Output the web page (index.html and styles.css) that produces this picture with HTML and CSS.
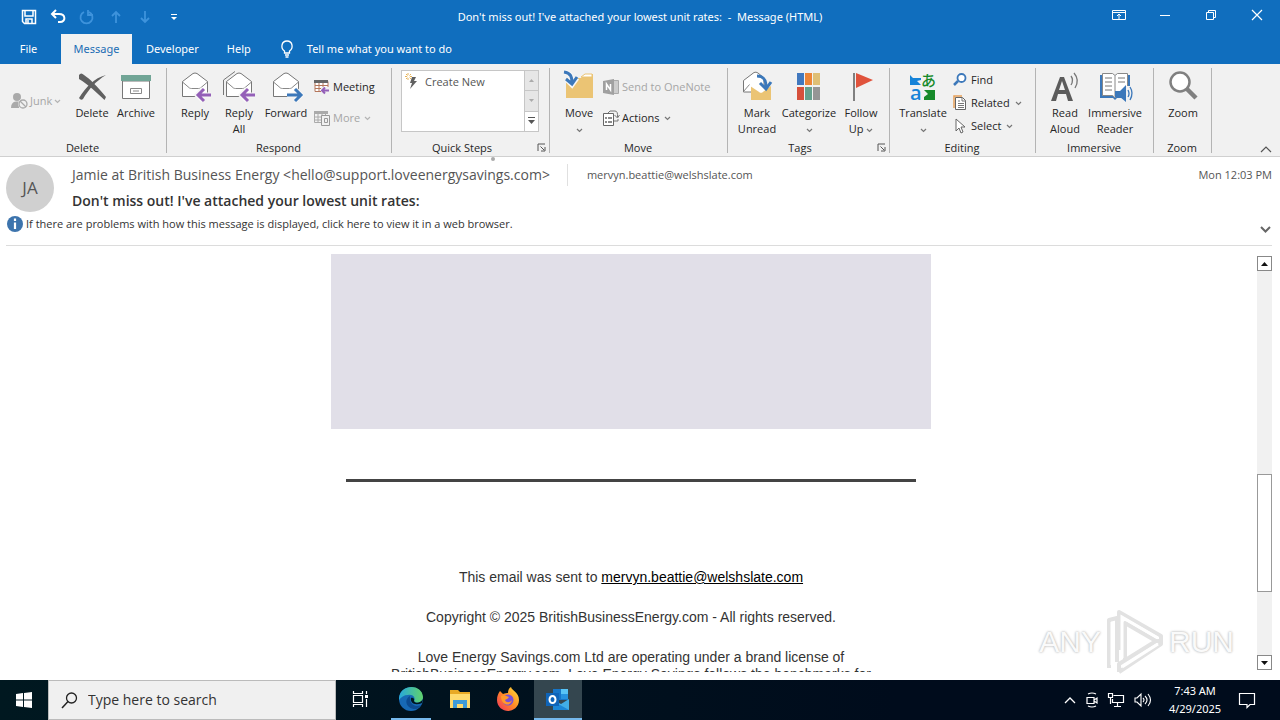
FILE: index.html
```html
<!DOCTYPE html>
<html lang="en">
<head>
<meta charset="utf-8">
<title>Don't miss out! I've attached your lowest unit rates: - Message (HTML)</title>
<link rel="stylesheet" href="styles.css">
</head>
<body>
<svg class="defs" aria-hidden="true">
  <symbol id="caret" viewBox="0 0 7 5"><path d="M1 1l2.500 2.500L6 1" fill="none" stroke="currentColor" stroke-width="1.200"/></symbol>
  <symbol id="launcher" viewBox="0 0 9 9"><path d="M1 8V1h7M3.500 3.500L7 7M8 4v4H4" fill="none" stroke="#555" /></symbol>
  <symbol id="envelope" viewBox="0 0 32 32"><path d="M3.500 11.500L14 3.500q2-1 4 0L28.500 11.500v15h-25z" fill="#fff" stroke="#777"/><path d="M3.500 12l7 6q1 .5 2 .500h7q1 0 2-.5l7-6" fill="none" stroke="#888"/></symbol>
</svg>

<header class="titlebar">
  <div class="quick">
    <button aria-label="Save"><svg width="16" height="16" viewBox="0 0 16 16"><path d="M1.500 1.500h13v13h-11l-2-2zM4 2v5h8V2M5 14v-4h6v4M7 11v3" fill="none" stroke="#fff" stroke-width="1.500"/></svg></button>
    <button aria-label="Undo"><svg width="16" height="16" viewBox="0 0 16 16"><path d="M6 1L2 5l4 4M2 5h7c7 0 7 8 1 8H8" fill="none" stroke="#fff" stroke-width="2"/></svg></button>
    <button aria-label="Redo"><svg width="16" height="16" viewBox="0 0 16 16"><path d="M10 3a6 6 0 1 1-5 0M9 1v5h5" fill="none" stroke="#3e93dc" stroke-width="1.800"/></svg></button>
    <button aria-label="Previous item"><svg width="16" height="16" viewBox="0 0 16 16"><path d="M8 14V3M4 7l4-4 4 4" fill="none" stroke="#3e93dc" stroke-width="1.800"/></svg></button>
    <button aria-label="Next item"><svg width="16" height="16" viewBox="0 0 16 16"><path d="M8 2v11M4 9l4 4 4-4" fill="none" stroke="#3e93dc" stroke-width="1.800"/></svg></button>
    <button aria-label="Customize toolbar"><svg width="16" height="16" viewBox="0 0 16 16"><path d="M5 5.500h6" stroke="#fff"/><path d="M5 8h6l-3 3z" fill="#fff"/></svg></button>
  </div>
  <h1>Don't miss out! I've attached your lowest unit rates:&nbsp; -&nbsp; Message (HTML)</h1>
  <div class="controls">
    <button aria-label="Ribbon display options"><svg width="14" height="12" viewBox="0 0 14 12"><path d="M.5 1.500h13v9H.5zM.5 3.500h13M7 10V5M5 7l2-2 2 2" fill="none" stroke="#fff"/></svg></button>
    <button aria-label="Minimize"><svg width="12" height="12" viewBox="0 0 12 12"><path d="M1 6.500h10" stroke="#fff"/></svg></button>
    <button aria-label="Restore"><svg width="12" height="12" viewBox="0 0 12 12"><path d="M1.500 3.500h7v7h-7zM3.500 3V1.500h7v7H9" fill="none" stroke="#fff"/></svg></button>
    <button aria-label="Close"><svg width="12" height="12" viewBox="0 0 12 12"><path d="M1 1l10 10M11 1L1 11" stroke="#fff" stroke-width="1.200"/></svg></button>
  </div>
</header>

<nav class="tabs">
  <button class="tab file">File</button>
  <button class="tab active">Message</button>
  <button class="tab">Developer</button>
  <button class="tab">Help</button>
  <button class="tell"><svg width="14" height="18" viewBox="0 0 14 18"><path d="M4.500 13V11C.5 8.500 1 1 7 1s6.500 7.500 2.500 10v2zM5 15h4M5.500 17h3" fill="none" stroke="#fff" stroke-width="1.300"/></svg>Tell me what you want to do</button>
</nav>

<section class="ribbon">
  <div class="group g-delete">
    <div class="tools">
      <button class="small off junk"><svg width="18" height="18" viewBox="0 0 18 18"><circle cx="6" cy="5" r="4" fill="#aaa"/><path d="M0 16q0-6 5-6.500h3V16z" fill="#aaa"/><circle cx="12" cy="12" r="5" fill="#f1f1f1"/><circle cx="12" cy="12" r="4" fill="none" stroke="#aaa" stroke-width="1.300"/><path d="M9 9l6 6" stroke="#aaa" stroke-width="1.300"/></svg>Junk<svg class="caret"><use href="#caret"/></svg></button>
      <button class="big w44"><svg width="32" height="32" viewBox="0 0 32 32"><path d="M3 5q2-3 5 0c6 4 13 11 22 22l-1.500 3C20 22 13 15 3 9z" fill="#606060"/><path d="M30 5C20 11 13 19 7 29q-2 2-4-1C10 17 18 8 30 5z" fill="#606060"/></svg><span>Delete</span></button>
      <button class="big w44"><svg width="32" height="32" viewBox="0 0 32 32"><path d="M2.500 11h27v17.500h-27z" fill="#fff" stroke="#777"/><path d="M1 5h30v6H1z" fill="#71a596"/><path d="M10.500 18.500h11v5h-11zM13 21h6" fill="none" stroke="#888"/></svg><span>Archive</span></button>
    </div>
    <h2>Delete</h2>
  </div>
  <div class="group g-respond">
    <div class="tools">
      <button class="big w44"><svg width="32" height="32" viewBox="0 0 32 32"><use href="#envelope"/><path d="M18 25h14M24 19l-6 6 6 6" fill="none" stroke="#f7f7f7" stroke-width="5"/><path d="M19 25h13M25 19l-6 6 6 6" fill="none" stroke="#9460b8" stroke-width="3"/></svg><span>Reply</span></button>
      <button class="big w44"><svg width="32" height="32" viewBox="0 0 32 32"><path d="M.5 25V10L12 1.500" fill="none" stroke="#777"/><use href="#envelope"/><path d="M18 25h14M24 19l-6 6 6 6" fill="none" stroke="#f7f7f7" stroke-width="5"/><path d="M19 25h13M25 19l-6 6 6 6" fill="none" stroke="#9460b8" stroke-width="3"/></svg><span>Reply<br>All</span></button>
      <button class="big w50"><svg width="32" height="32" viewBox="0 0 32 32"><use href="#envelope"/><path d="M17 25h13M25 19l6 6-6 6" fill="none" stroke="#f7f7f7" stroke-width="5"/><path d="M17 25h13M25 19l6 6-6 6" fill="none" stroke="#3c78ba" stroke-width="3"/></svg><span>Forward</span></button>
      <div class="stack two">
        <button class="small"><svg width="16" height="16" viewBox="0 0 16 16"><path d="M1 2.500h13v10h-13zM1 6.500h13M1 9.500h13M5 4v8M9 4v8" fill="#fff" stroke="#b4765b"/><path d="M0 1h14v3H0z" fill="#666"/><path d="M7 8h9v7H7z" fill="#f1f1f1"/><path d="M8 11.500h7M11 8.500l-3 3 3 3" fill="none" stroke="#9460b8" stroke-width="2"/></svg>Meeting</button>
        <button class="small off"><svg width="16" height="16" viewBox="0 0 16 16"><path d="M0 1h14v3H0z" fill="#aaa"/><path d="M.5 3.500h11v9H.5zM.5 7h11M.5 10h11M4 4v8M8 4v8" fill="none" stroke="#aaa"/><path d="M7.500 5.500h8v10h-8zM10.500 8.500h3v4h-3z" fill="#f1f1f1" stroke="#999"/></svg>More<svg class="caret"><use href="#caret"/></svg></button>
      </div>
    </div>
    <h2>Respond</h2>
  </div>
  <div class="group g-steps">
    <div class="tools">
      <div class="gallery">
        <button class="step"><svg width="16" height="18" viewBox="0 0 16 18"><path d="M3 0v7M0 3.500h7M1 1l5 5M6 1L1 6" stroke="#e6b45a"/><circle cx="3.500" cy="3.500" r="1.500" fill="#fff"/><path d="M7 4h4l-2 4h3L5 16l2-6H5z" fill="#606060"/></svg>Create New</button>
        <div class="spin">
          <button aria-label="Row up"><svg width="7" height="5" viewBox="0 0 7 5"><path d="M1 4l2.500-3L6 4z" fill="#aaa"/></svg></button>
          <button aria-label="Row down"><svg width="7" height="5" viewBox="0 0 7 5"><path d="M1 1l2.500 3L6 1z" fill="#aaa"/></svg></button>
          <button class="more" aria-label="More steps"><svg width="7" height="8" viewBox="0 0 7 8"><path d="M0 .5h7" stroke="#555"/><path d="M0 3h7L3.500 7z" fill="#555"/></svg></button>
        </div>
      </div>
    </div>
    <h2>Quick Steps</h2>
    <button class="launch" aria-label="Manage quick steps"><svg width="9" height="9"><use href="#launcher"/></svg></button>
  </div>
  <div class="group g-move">
    <div class="tools">
      <button class="big w40"><svg width="32" height="32" viewBox="0 0 32 32"><path d="M3 8h15l4-4h8v24H3z" fill="#ebc474"/><path d="M18 7l4-3h7v3z" fill="#fff" stroke="#ebc474"/><path d="M1 2c7 1 8 5 8 11M3 9l6 6 5-7" fill="none" stroke="#f7f7f7" stroke-width="5"/><path d="M1 2c7 1 8 5 8 11M3 9l6 5 5-7" fill="none" stroke="#3c78ba" stroke-width="3"/></svg><span>Move<br><svg class="caret"><use href="#caret"/></svg></span></button>
      <div class="stack two">
        <button class="small off"><svg width="16" height="16" viewBox="0 0 16 16"><path d="M9 1.500h6.500v13H9z" fill="#ccc" stroke="#aaa"/><path d="M0 2l11-2v16L0 14z" fill="#a0a0a0"/><path d="M3.500 11V5l4 6V5" fill="none" stroke="#fff" stroke-width="1.500"/></svg>Send to OneNote</button>
        <button class="small"><svg width="16" height="16" viewBox="0 0 16 16"><path d="M.5 3.500h10v12H.5z" fill="#fff" stroke="#666"/><path d="M2 8h2M2 12h2M5 8h4M5 12h4" stroke="#666" stroke-width="1.500"/><path d="M5 3l2-2h5q3 0 2.500 6M11.500 5l3 3 2-3M11 11h4V9" fill="none" stroke="#777"/></svg>Actions<svg class="caret"><use href="#caret"/></svg></button>
      </div>
    </div>
    <h2>Move</h2>
  </div>
  <div class="group g-tags">
    <div class="tools">
      <button class="big w40"><svg width="32" height="32" viewBox="0 0 32 32"><path d="M2.500 10.500L13 2.500q2-1 4 .5l6 5v14H2.500z" fill="#fff" stroke="#777"/><path d="M2.500 21.500l6-7" stroke="#888"/><path d="M10 16h20v14H10z" fill="#ebc474"/><path d="M10 15.500l9 6q1 .5 2 0l8-6" fill="#fff" stroke="#fff" stroke-width="2"/><path d="M16 6c7 0 9 4 9 11M19 13l6 6 5-7" fill="none" stroke="#3c78ba" stroke-width="3"/></svg><span>Mark<br>Unread</span></button>
      <button class="big w60"><svg width="32" height="32" viewBox="0 0 32 32"><path d="M4 3h7v12H4z" fill="#4178be"/><path d="M12 3h7v12h-7z" fill="#ec8537"/><path d="M20 3h7v12h-7z" fill="#dfbf75"/><path d="M4 17h7v13H4z" fill="#d6503b"/><path d="M12 17h7v13h-7z" fill="#65a08d"/><path d="M20 17h7v13h-7z" fill="#959595"/></svg><span>Categorize<br><svg class="caret"><use href="#caret"/></svg></span></button>
      <button class="big w40"><svg width="32" height="32" viewBox="0 0 32 32"><path d="M9 3v28" stroke="#808080" stroke-width="2"/><path d="M11 3l17 7-17 8z" fill="#e0533c"/></svg><span>Follow<br>Up <svg class="caret"><use href="#caret"/></svg></span></button>
    </div>
    <h2>Tags</h2>
    <button class="launch" aria-label="Message options"><svg width="9" height="9"><use href="#launcher"/></svg></button>
  </div>
  <div class="group g-editing">
    <div class="tools">
      <button class="big w52"><svg width="32" height="32" viewBox="0 0 32 32"><path d="M3 5l3 3h8v2l-4 1 4 4H3z" fill="#1683d8"/><text x="3" y="30" class="latin">a</text><text x="14" y="16" class="kana">あ</text><path d="M28 30V20H17l4 4-4 3v3z" fill="#168a2a"/></svg><span>Translate<br><svg class="caret"><use href="#caret"/></svg></span></button>
      <div class="stack three">
        <button class="small"><svg width="14" height="16" viewBox="0 0 14 16"><circle cx="8.500" cy="6" r="4" fill="#fff" stroke="#3c78ba" stroke-width="1.800"/><path d="M5 9l-4 4" stroke="#3c78ba" stroke-width="2.500"/></svg>Find</button>
        <button class="small"><svg width="14" height="16" viewBox="0 0 14 16"><path d="M1 13V1h8" fill="none" stroke="#e6a05a" stroke-width="1.500"/><path d="M2.500 2.500h7l3 3v9h-10z" fill="#fff" stroke="#666"/><path d="M9 3v3h4M5 8.500h6M5 10.500h6M5 12.500h6M5 6h2" fill="none" stroke="#777"/></svg>Related<svg class="caret"><use href="#caret"/></svg></button>
        <button class="small"><svg width="14" height="16" viewBox="0 0 14 16"><path d="M3 1v12l3-3 2 5 2-1-2-5h4z" fill="#fff" stroke="#666"/></svg>Select<svg class="caret"><use href="#caret"/></svg></button>
      </div>
    </div>
    <h2>Editing</h2>
  </div>
  <div class="group g-immersive">
    <div class="tools">
      <button class="big w40"><svg width="32" height="32" viewBox="0 0 32 32"><path d="M2 31L11 7h4l9 24h-5l-2-7H9l-2 7zM10 20h6l-3-9z" fill="#5c5c5c"/><path d="M22 6q3 4 0 9M25 3q6 7 1 15" fill="none" stroke="#777" stroke-width="1.300"/></svg><span>Read<br>Aloud</span></button>
      <button class="big w60"><svg width="32" height="32" viewBox="0 0 32 32"><path d="M1 5h30v23H18l-2 2-2-2H1z" fill="#3c78ba"/><path d="M3.500 3.500h10l2.500 2 2.500-2h10v22h-10l-2.500 2-2.500-2h-10zM16 6v20" fill="#fff" stroke="#888"/><path d="M6 8h7M6 12h7M6 16h7M6 20h7M19 8h7M19 12h7" stroke="#777"/><path d="M26 16h7v16h-7z" fill="#f1f1f1"/><path d="M16 21h5l6-6v17l-6-5h-5z" fill="#3c78ba"/><path d="M29 20q2 4 0 7M31 17q4 6 0 13" fill="none" stroke="#3c78ba" stroke-width="1.300"/></svg><span>Immersive<br>Reader</span></button>
    </div>
    <h2>Immersive</h2>
  </div>
  <div class="group g-zoom">
    <div class="tools">
      <button class="big w40"><svg width="32" height="32" viewBox="0 0 32 32"><circle cx="13" cy="12" r="9.500" fill="#fff" stroke="#808080" stroke-width="2.500"/><path d="M20 19l9 9" stroke="#808080" stroke-width="4.500"/></svg><span>Zoom</span></button>
    </div>
    <h2>Zoom</h2>
  </div>
  <button class="collapse" aria-label="Collapse the ribbon"><svg width="12" height="7" viewBox="0 0 12 7"><path d="M1 6l5-5 5 5" fill="none" stroke="#555" stroke-width="1.200"/></svg></button>
  <span class="grip"></span>
</section>

<section class="message">
  <div class="avatar">JA</div>
  <div class="headers">
    <div class="people">
      <span class="from">Jamie at British Business Energy &lt;hello@support.loveenergysavings.com&gt;</span>
      <span class="to">mervyn.beattie@welshslate.com</span>
      <time class="date">Mon 12:03 PM</time>
    </div>
    <div class="subject">Don't miss out! I've attached your lowest unit rates:</div>
  </div>
  <button class="info"><svg width="16" height="16" viewBox="0 0 16 16"><circle cx="8" cy="8" r="8" fill="#3d74ad"/><path d="M8 2.500v2.500M8 6.500V13" stroke="#fff" stroke-width="2.200"/></svg>If there are problems with how this message is displayed, click here to view it in a web browser.</button>
  <button class="expand" aria-label="Expand header"><svg width="11" height="8" viewBox="0 0 11 8"><path d="M1 1l4.500 4.500L10 1" fill="none" stroke="#666" stroke-width="2"/></svg></button>
</section>

<main class="body">
  <article class="mail">
    <div class="banner"></div>
    <hr>
    <p>This email was sent to <a href="#">mervyn.beattie@welshslate.com</a></p>
    <p>Copyright © 2025 BritishBusinessEnergy.com - All rights reserved.</p>
    <p>Love Energy Savings.com Ltd are operating under a brand license of BritishBusinessEnergy.com. Love Energy Savings follows the benchmarks for</p>
  </article>
  <div class="scroll">
    <button aria-label="Scroll up"><svg width="7" height="4" viewBox="0 0 7 4"><path d="M0 4l3.500-4L7 4z" fill="#111"/></svg></button>
    <div class="track"><div class="thumb"></div></div>
    <button aria-label="Scroll down"><svg width="7" height="4" viewBox="0 0 7 4"><path d="M0 0l3.500 4L7 0z" fill="#111"/></svg></button>
  </div>
  <div class="watermark">
    <span>ANY</span>
    <svg width="56" height="64" viewBox="0 0 56 64"><path d="M2 58V10l8-2v44M12 40V2l42 24v5h-5L18 13v38M12 62v-8l37-23M12 62l42-28v-3" fill="none" stroke="#e2e2e2" stroke-width="4" stroke-linejoin="round"/><path d="M5 55V12M15 48V7l36 21M15 57l36-23" fill="none" stroke="#fff" stroke-width="3"/></svg>
    <span>RUN</span>
  </div>
</main>

<footer class="taskbar">
  <button class="start" aria-label="Start"><svg width="16" height="16" viewBox="0 0 16 16"><path d="M0 2l7-1v6.500H0zM8 1l8-1v7.500H8zM0 8.500h7V15l-7-1zM8 8.500h8V16l-8-1z" fill="#fff"/></svg></button>
  <label class="search"><svg width="17" height="17" viewBox="0 0 17 17"><circle cx="10.500" cy="6" r="5" fill="none" stroke="#222" stroke-width="1.300"/><path d="M7 9.500L1 16" stroke="#222" stroke-width="1.500"/></svg><input type="text" placeholder="Type here to search" aria-label="Type here to search"></label>
  <button class="app" aria-label="Task view"><svg width="18" height="16" viewBox="0 0 18 16"><path d="M2.500 4.500h9v7h-9zM2.500 0v2.500h9V0M2.500 16v-2.500h9V16M15.500 0v3M15.500 8v8" fill="none" stroke="#fff" stroke-width="1.200"/><path d="M14 4h3v3h-3z" fill="#fff"/></svg></button>
  <button class="app open edge" aria-label="Edge"><svg width="24" height="24" viewBox="0 0 24 24"><defs><linearGradient id="sea"><stop stop-color="#27a7dc"/><stop offset="1" stop-color="#61d26b"/></linearGradient></defs><circle cx="12" cy="12" r="12" fill="#1769b5"/><path d="M0 11C1-3 23-4 24 10c0 6-7 7-9 4 2-3-1-7-6-6-4 0-7 2-9 5z" fill="url(#sea)"/><path d="M11 9c-7 4-3 13 5 13 3 0 5-2 6-4-6 3-12-1-11-9z" fill="#0c4b91"/><path d="M12 11c-1 5 4 8 11 5l1-4c-2 4-8 5-9 2 1-2-1-4-3-3z" fill="#001720"/></svg></button>
  <button class="app" aria-label="File Explorer"><svg width="22" height="22" viewBox="0 0 22 22"><path d="M1 2h8l2 2h10v16H1z" fill="#e8a925"/><path d="M1 6h20v14H1z" fill="#ffda6d"/><path d="M4 20v-8h14v8h-4v-4H8v4z" fill="#3f9bd7"/></svg></button>
  <button class="app" aria-label="Firefox"><svg width="24" height="24" viewBox="0 0 24 24"><defs><linearGradient id="fire" x1="1" x2="0" y2="1"><stop stop-color="#ffe33c"/><stop offset=".5" stop-color="#ff8b25"/><stop offset="1" stop-color="#f02d61"/></linearGradient></defs><path d="M4 4l3 3c2-1 4-1 5-1 0-3 1-5 3-6 1 4 8 5 8 13 0 7-6 11-11 11S1 20 1 13c0-4 1-6 3-9z" fill="url(#fire)"/><circle cx="12" cy="13" r="5.500" fill="#7950d5"/><path d="M5 9c4-2 5 0 8 1-1 2-3 2-4 3 1 3 5 3 7 0-1 7-11 6-11-4z" fill="#ff9a2b"/></svg></button>
  <button class="app open current" aria-label="Outlook"><svg width="24" height="22" viewBox="0 0 24 22"><path d="M7 1h15v11H7z" fill="#1675c8"/><path d="M15 1h7v5h-7z" fill="#58c3f5"/><path d="M15 6h7v5h-7z" fill="#2692df"/><path d="M7 12l8 4 8-5v11H7z" fill="#42aee6"/><path d="M7 13l16 9H7z" fill="#1c87d6"/><path d="M0 5h13v13H0z" fill="#0f64b8"/><ellipse cx="6.500" cy="11.500" rx="3" ry="3.500" fill="none" stroke="#fff" stroke-width="2"/></svg></button>
  <div class="tray">
    <button aria-label="Show hidden icons"><svg width="12" height="8" viewBox="0 0 12 8"><path d="M1 7l5-5 5 5" fill="none" stroke="#fff" stroke-width="1.300"/></svg></button>
    <button aria-label="Meet now"><svg width="14" height="16" viewBox="0 0 14 16"><path d="M2 5.500h7v6H2zM9 8l3-2v5L9 9M3 2q4-2 8 0M3 14q4 2 8 0" fill="none" stroke="#fff" stroke-width="1.200"/></svg></button>
    <button aria-label="Network"><svg width="17" height="16" viewBox="0 0 17 16"><path d="M5.500 3.500h10v7h-11V7M9.500 11v3M6 14.500h7M.5 1.500h4v4h-4zM2.500 6v6" fill="none" stroke="#fff" stroke-width="1.200"/></svg></button>
    <button aria-label="Volume"><svg width="18" height="16" viewBox="0 0 18 16"><path d="M1 6h2l4-4v12l-4-4H1zM9 6q2 2 0 4M11 4q4 4 0 8M14 2q5 6 0 12" fill="none" stroke="#fff" stroke-width="1.100"/></svg></button>
  </div>
  <div class="clock">7:43 AM<br>4/29/2025</div>
  <button class="notes" aria-label="Notifications"><svg width="16" height="16" viewBox="0 0 16 16"><path d="M.5 1.500h15v11H11l-3 3v-3H.5z" fill="none" stroke="#fff" stroke-width="1.200"/></svg></button>
</footer>
</body>
</html>
```
FILE: styles.css
```css
* { box-sizing: border-box; }
body {
  margin: 0;
  height: 100vh;
  display: flex;
  flex-direction: column;
  overflow: hidden;
  background: #fff;
  color: #262626;
  font: 11px/16px "Open Sans", "Noto Sans", sans-serif;
}
button {
  padding: 0;
  border: 0;
  background: none;
  color: inherit;
  font: inherit;
  display: flex;
  align-items: center;
  justify-content: center;
}
svg { flex: none; overflow: visible; }
h1, h2, p { margin: 0; font: inherit; }
.defs { position: absolute; width: 0; height: 0; }

.titlebar {
  display: grid;
  grid-template-columns: 1fr auto 1fr;
  align-items: center;
  height: 34px;
  background: #106ebe;
  color: #fff;
  font-family: "Noto Sans", sans-serif;
}
.quick { display: flex; gap: 13px; padding-left: 21px; }
.controls { display: flex; justify-content: flex-end; padding-bottom: 4px; }
.controls button { width: 46px; height: 30px; }
.tabs { display: flex; height: 30px; background: #106ebe; color: #fff; font-family: "Noto Sans", sans-serif; }
.tab { padding: 0 14px; }
.tab.file { width: 61px; padding: 0 24px 0 20px; }
.tab.active { width: 71px; padding: 0; background: #f1f1f1; color: #1b6cb4; }
.tell { gap: 13px; padding-left: 15px; }

.ribbon {
  position: relative;
  display: flex;
  height: 93px;
  background: #f1f1f1;
  border-bottom: 1px solid #d0d0d0;
}
.group { position: relative; display: flex; flex-direction: column; padding-top: 6px; }
.group::after {
  content: "";
  position: absolute;
  right: 0;
  top: 4px;
  bottom: 3px;
  border-right: 1px solid #b4b4b4;
}
.tools { display: flex; height: 70px; }
.group h2 { padding-right: 2px; text-align: center; }
.g-delete { width: 167px; }
.g-delete .tools { padding-left: 11px; }
.g-respond { width: 225px; }
.g-respond .tools { padding-left: 6px; }
.g-steps { width: 158px; }
.g-steps .tools { padding-left: 9px; }
.g-steps h2, .g-tags h2 { padding-right: 18px; }
.g-move { width: 178px; }
.g-move .tools { padding-left: 9px; }
.g-tags { width: 162px; }
.g-tags .tools { padding-left: 9px; gap: 2px; }
.g-editing { width: 146px; }
.g-editing .tools { padding-left: 7px; }
.g-immersive { width: 118px; }
.g-immersive .tools { padding-left: 9px; }
.g-zoom { width: 58px; }
.g-zoom .tools { justify-content: center; }
.big { flex-direction: column; justify-content: flex-start; gap: 3px; white-space: nowrap; }
.w40 { width: 40px; }
.w44 { width: 44px; }
.w50 { width: 50px; }
.w52 { width: 52px; }
.w60 { width: 60px; }
.small { gap: 3px; height: 20px; justify-content: flex-start; white-space: nowrap; }
.junk { width: 59px; height: 62px; gap: 1px; }
.off { color: #a6a6a6; }
.caret { width: 7px; height: 5px; margin-left: 1px; color: #777; vertical-align: middle; }
.big .caret { margin-left: 0; }
.off .caret { color: #b4b4b4; }
.stack { display: flex; flex-direction: column; padding-left: 4px; }
.g-respond .stack { padding-left: 3px; }
.two { gap: 11px; padding-top: 7px; }
.three { gap: 3px; }
.three .small { gap: 4px; }
.latin { font: 600 20px "Open Sans", sans-serif; fill: #1683d8; }
.kana { font: 500 15px "Noto Sans CJK JP", sans-serif; fill: #168a2a; }
.gallery { display: flex; width: 138px; height: 62px; background: #fff; border: 1px solid #c6c6c6; }
.step { flex: 1; gap: 4px; height: 22px; padding-left: 3px; justify-content: flex-start; color: #555; }
.spin { display: flex; flex-direction: column; width: 14px; border-left: 1px solid #c6c6c6; }
.spin button { flex: 1; background: #e6e6e6; border-bottom: 1px solid #c6c6c6; }
.spin .more { background: #fff; border: 0; }
.launch { position: absolute; right: 4px; bottom: 4px; }
.collapse { position: absolute; right: 8px; bottom: 3px; }
.grip { position: absolute; left: 491px; bottom: -5px; width: 4px; height: 4px; border-radius: 2px; background: #aaa; }

.message {
  position: relative;
  display: grid;
  grid-template-columns: 48px 1fr;
  grid-template-rows: 50px 20px;
  column-gap: 18px;
  margin: 0 8px 0 6px;
  padding-top: 7px;
  height: 89px;
  border-bottom: 1px solid #dcdcdc;
}
.avatar { width: 48px; height: 48px; border-radius: 50%; background: #d0d0d0; color: #555; font-size: 17px; line-height: 48px; text-align: center; }
.people { display: flex; align-items: center; height: 22px; color: #555; }
.from { padding-right: 17px; font-size: 14px; line-height: 22px; border-right: 1px solid #e0e0e0; }
.to { padding-left: 19px; }
.date { margin-left: auto; }
.subject { padding-top: 4px; font-size: 14px; line-height: 22px; font-weight: 600; color: #333; }
.info { grid-column: 1 / -1; gap: 3px; justify-content: flex-start; padding-left: 1px; color: #333; }
.expand { position: absolute; right: 1px; bottom: 11px; }

.body { position: relative; flex: 1; display: flex; min-height: 0; padding: 8px 8px 8px 0; }
.mail { flex: 1; overflow: hidden; padding-left: 5px; color: #333; font: 14px/17px "Liberation Sans", Arial, sans-serif; text-align: center; }
.banner { width: 600px; height: 175px; margin: 0 auto; background: #e1dfe8; }
.mail hr { width: 570px; height: 3px; margin: 50px auto 87px; border: 0; background: #444; }
.mail p { width: 500px; margin: 0 auto 23px; }
.mail a { color: #000; }
.scroll { display: flex; flex-direction: column; width: 15px; margin: 2px 0; background: #f1f1f1; }
.scroll button { height: 15px; background: #fff; border: 1px solid #888; }
.track { flex: 1; padding-top: 203px; }
.thumb { height: 118px; background: #fff; border: 1px solid #999; }
.watermark {
  position: absolute;
  right: 46px;
  bottom: 6px;
  display: flex;
  align-items: center;
  gap: 6px;
  color: #fafafa;
  font: 30px/40px "Liberation Sans Narrow", "Liberation Sans", sans-serif;
  text-shadow: 0 0 2px #bbb, 0 0 3px #ccc;
}

.taskbar { display: flex; height: 40px; background: linear-gradient(90deg, #001820, #000c1c 70%); color: #fff; }
.start { width: 48px; }
.search { display: flex; align-items: center; gap: 10px; width: 288px; padding-left: 12px; background: #f0f0f0; border: 1px solid #bbb; }
.search input { flex: 1; min-width: 0; padding: 0; border: 0; outline: 0; background: none; font: 14px/20px "Open Sans", sans-serif; }
.search input::placeholder { color: #333; opacity: 1; }
.app { width: 48px; border-bottom: 2px solid transparent; }
.open { border-bottom-color: #76b9ed; }
.edge { width: 40px; margin: 0 5px 0 7px; }
.current { background: #34464f; margin-left: 2px; }
.tray { display: flex; align-items: center; gap: 9px; margin-left: auto; padding-right: 8px; }
.clock { width: 70px; padding-top: 2px; font: 11px/18px "Noto Sans", sans-serif; text-align: center; }
.notes { width: 34px; margin-right: 16px; }
```
